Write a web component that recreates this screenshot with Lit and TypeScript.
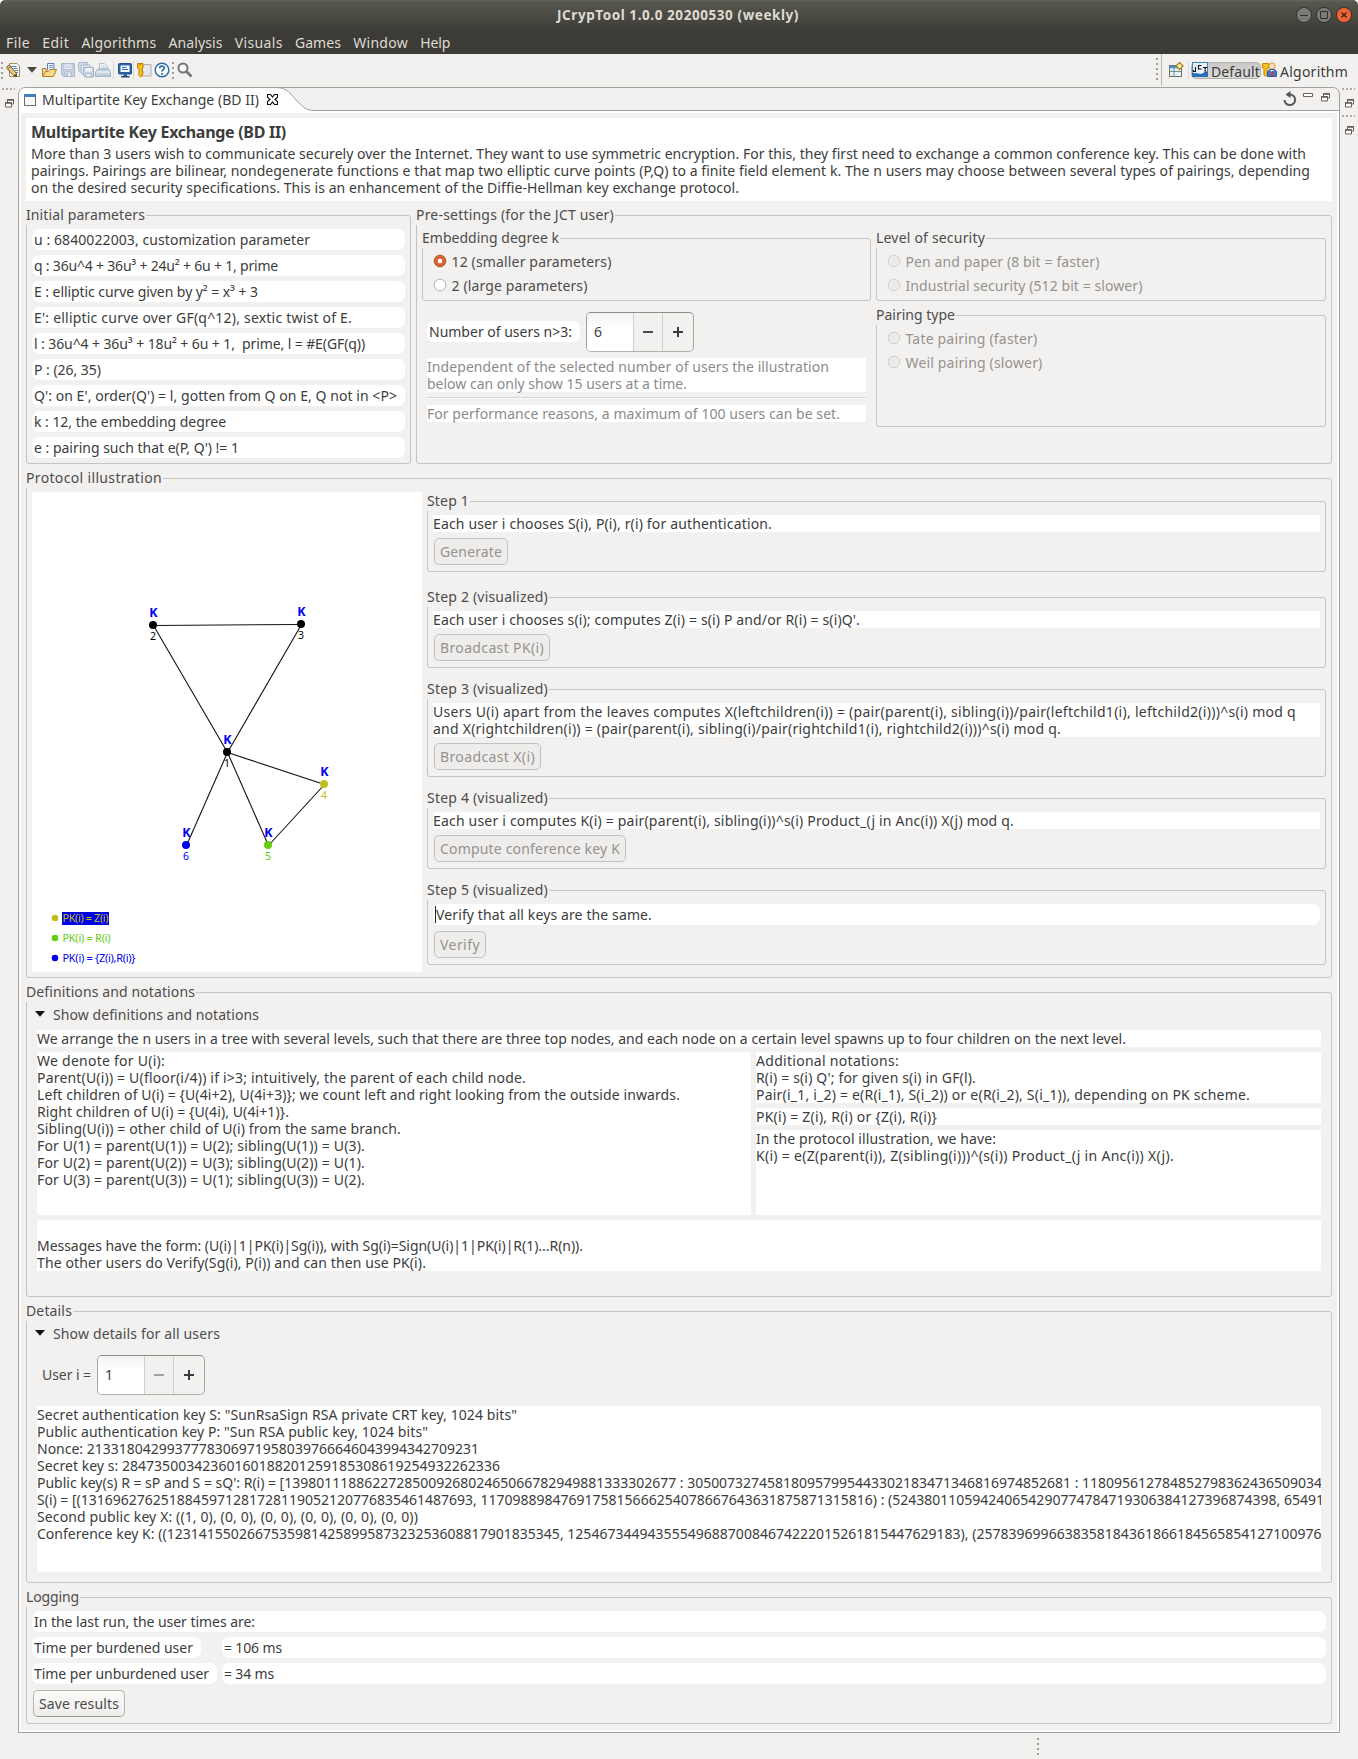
import { LitElement, html, css, svg, nothing } from "lit";
import { customElement, property } from "lit/decorators.js";

/** A single line of text whose tracking is adjusted to occupy a given width. */
@customElement("fit-text")
class FitText extends LitElement {
  static styles = css`
    :host { display: inline-block; white-space: pre; }
    .run { display: inline-block; }
  `;
  @property() text = "";
  @property({ type: Number }) w = 0;
  render() {
    return html`<span class="run">${this.text}</span>`;
  }
  updated() {
    const run = this.renderRoot.querySelector<HTMLElement>(".run")!;
    run.style.letterSpacing = "0px";
    const natural = run.getBoundingClientRect().width;
    run.style.letterSpacing = `${(this.w - natural) / Math.max(1, this.text.length)}px`;
  }
}

const t = (text: string, w: number) => html`<fit-text .text=${text} .w=${w}></fit-text>`;

type Line = [string, number];

const MENU: Line[] = [["File", 24], ["Edit", 27], ["Algorithms", 75], ["Analysis", 54], ["Visuals", 48], ["Games", 46], ["Window", 55], ["Help", 30]];

const INTRO: Line[] = [
  ["More than 3 users wish to communicate securely over the Internet. They want to use symmetric encryption. For this, they first need to exchange a common conference key. This can be done with", 1275],
  ["pairings. Pairings are bilinear, nondegenerate functions e that map two elliptic curve points (P,Q) to a finite field element k. The n users may choose between several types of pairings, depending", 1279],
  ["on the desired security specifications. This is an enhancement of the Diffie-Hellman key exchange protocol.", 708],
];

const PARAMS: Line[] = [
  ["u : 6840022003, customization parameter", 276],
  ["q : 36u^4 + 36u³ + 24u² + 6u + 1, prime", 244],
  ["E : elliptic curve given by y² = x³ + 3", 224],
  ["E': elliptic curve over GF(q^12), sextic twist of E.", 318],
  ["l : 36u^4 + 36u³ + 18u² + 6u + 1,  prime, l = #E(GF(q))", 331],
  ["P : (26, 35)", 67],
  ["Q': on E', order(Q') = l, gotten from Q on E, Q not in <P>", 363],
  ["k : 12, the embedding degree", 192],
  ["e : pairing such that e(P, Q') != 1", 205],
];

interface Step { title: Line; lines: Line[]; button: Line; input?: boolean; }
const STEPS: Step[] = [
  { title: ["Step 1", 42], lines: [["Each user i chooses S(i), P(i), r(i) for authentication.", 339]], button: ["Generate", 62] },
  { title: ["Step 2 (visualized)", 121], lines: [["Each user i chooses s(i); computes Z(i) = s(i) P and/or R(i) = s(i)Q'.", 427]], button: ["Broadcast PK(i)", 104] },
  {
    title: ["Step 3 (visualized)", 121],
    lines: [
      ["Users U(i) apart from the leaves computes X(leftchildren(i)) = (pair(parent(i), sibling(i))/pair(leftchild1(i), leftchild2(i)))^s(i) mod q", 863],
      ["and X(rightchildren(i)) = (pair(parent(i), sibling(i)/pair(rightchild1(i), rightchild2(i)))^s(i) mod q.", 628],
    ],
    button: ["Broadcast X(i)", 95],
  },
  { title: ["Step 4 (visualized)", 121], lines: [["Each user i computes K(i) = pair(parent(i), sibling(i))^s(i) Product_(j in Anc(i)) X(j) mod q.", 581]], button: ["Compute conference key K", 180] },
  { title: ["Step 5 (visualized)", 121], lines: [["Verify that all keys are the same.", 216]], button: ["Verify", 40], input: true },
];

const DENOTE: Line[] = [
  ["We denote for U(i):", 128],
  ["Parent(U(i)) = U(floor(i/4)) if i>3; intuitively, the parent of each child node.", 489],
  ["Left children of U(i) = {U(4i+2), U(4i+3)}; we count left and right looking from the outside inwards.", 643],
  ["Right children of U(i) = {U(4i), U(4i+1)}.", 252],
  ["Sibling(U(i)) = other child of U(i) from the same branch.", 364],
  ["For U(1) = parent(U(1)) = U(2); sibling(U(1)) = U(3).", 328],
  ["For U(2) = parent(U(2)) = U(3); sibling(U(2)) = U(1).", 328],
  ["For U(3) = parent(U(3)) = U(1); sibling(U(3)) = U(2).", 328],
];
const NOTATION: Line[] = [
  ["Additional notations:", 143],
  ["R(i) = s(i) Q'; for given s(i) in GF(l).", 220],
  ["Pair(i_1, i_2) = e(R(i_1), S(i_2)) or e(R(i_2), S(i_1)), depending on PK scheme.", 494],
];
const KEYS: Line[] = [
  ['Secret authentication key S: "SunRsaSign RSA private CRT key, 1024 bits"', 480],
  ['Public authentication key P: "Sun RSA public key, 1024 bits"', 391],
  ["Nonce: 2133180429937778306971958039766646043994342709231", 442],
  ["Secret key s: 28473500342360160188201259185308619254932262336", 463],
  ["Public key(s) R = sP and S = sQ': R(i) = [1398011188622728500926802465066782949881333302677 : 305007327458180957995443302183471346816974852681 : 118095612784852798362436509034", 1285],
  ["S(i) = [(1316962762518845971281728119052120776835461487693, 1170988984769175815666254078667643631875871315816) : (524380110594240654290774784719306384127396874398, 65491", 1287],
  ["Second public key X: ((1, 0), (0, 0), (0, 0), (0, 0), (0, 0), (0, 0))", 381],
  ["Conference key K: ((1231415502667535981425899587323253608817901835345, 1254673449435554968870084674222015261815447629183), (2578396996638358184361866184565854127100976", 1284.5],
];

const BLACK = "#000", OLIVE = "#bfbe1f", GREEN = "#66cc10", BLUE = "#0000ee";
const NODES = [
  { n: 1, x: 195, y: 260, c: BLACK },
  { n: 2, x: 121, y: 133, c: BLACK },
  { n: 3, x: 269, y: 132, c: BLACK },
  { n: 4, x: 292, y: 292, c: OLIVE },
  { n: 5, x: 236, y: 353, c: GREEN },
  { n: 6, x: 154, y: 353, c: BLUE },
];
const EDGES = [[2, 3], [2, 1], [3, 1], [1, 4], [1, 5], [1, 6], [4, 5]];

const ICONS = {
  newFile: svg`<path d="M3.500 1.500h7.500l2.500 2.500v10.500h-10z" fill="#f7f9fd" stroke="#a98f4e"/><path d="M5.500 4.500h5M7.500 6.500h4M9 8.500h3M10 10.500h2" stroke="#5b86c0"/><path d="M1 4.500l2.500-1.500 7 8.500v2.500l-3-.5-6.500-7z" fill="#e7c67f" stroke="#6d5222" stroke-width=".9"/><path d="M2 6.500l3-2M8 13.500l2.500 1v-2.500z" fill="#222" stroke="#6d5222" stroke-width=".8"/>`,
  open: svg`<path d="M6.500 8v-6.500h6.500v8" fill="#eef3fb" stroke="#5d82b5"/><path d="M8 3.500h4M8 5.500h4" stroke="#6f97cc"/><path d="M1.500 14v-7.500h3l1 1.500v3" fill="#f6d78c" stroke="#b07c1c"/><path d="M1.500 14.500l3-5h3l1.500-2h6.500l-3 7z" fill="#f8d98a" stroke="#b5801f"/>`,
  save: svg`<path d="M1.500 1.500h13v13h-11l-2-2z" fill="#c6d2e2" stroke="#a9b9cd"/><path d="M4 2h8v5.500h-8z" fill="#f1f4f8" stroke="#b3c1d4" stroke-width=".8"/><path d="M5 4h6M5 5.700h6" stroke="#bcc8d8" stroke-width=".8"/><path d="M5 10h6v4.500h-6z" fill="#eef1f5" stroke="#9fb0c6" stroke-width=".8"/><path d="M6.500 11h1.500v3h-1.500z" fill="#a4b4c9"/>`,
  saveAll: svg`<path d="M.5.5h9v10h-7l-2-2z" fill="#d6dfe9" stroke="#a9b9cd"/><path d="M3 3h9v9h-8l-1-1z" fill="#e4e9ef" stroke="#a9b9cd"/><path d="M5.500 5.500h10v9.500h-8.500l-1.500-1.500z" fill="#cbd6e4" stroke="#a1b3c9"/><path d="M7.500 6h6v3.500h-6z" fill="#f4f6f9"/><path d="M8 11.500h5v3.500h-5z" fill="#eef1f5" stroke="#9fb0c6" stroke-width=".8"/>`,
  print: svg`<path d="M4.500 8v-6.500h5l2.500 2.500v4" fill="#f0f3f7" stroke="#b4c2d3"/><path d="M6 4.500h4M6 6.500h5" stroke="#bccadb"/><path d="M.500 10l2.500-3h10.500l2 3v4.500h-15z" fill="#cbd5e2" stroke="#9db0c8"/><path d="M.500 10h15" stroke="#fff" stroke-width=".8"/><path d="M2 14.500l1.500-2h9l1.500 2z" fill="#b5c5d9"/>`,
  monitor: svg`<rect x="1.500" y="1.500" width="13" height="10.500" rx="1" fill="#2d62a8" stroke="#234f8d"/><rect x="3.500" y="3.500" width="9" height="6.500" fill="#f3f7fd"/><path d="M5 5.500h4.500M5 7.500h6" stroke="#3b6db1"/><path d="M6.500 12.500h3.500v1.500h2.500v1.500h-8.500v-1.500h2.500z" fill="#234c86"/>`,
  keyBook: svg`<path d="M6.500 2.500h8.500v11.500h-8.500z" fill="#e4e6f0" stroke="#b7b0a0"/><path d="M1.500 1.500h5.500v4.500h-1v3.500h1v2h-1v2.500l-1.500 1-1.500-1.500v-7.500h-1.500z" fill="#fcc914" stroke="#c37d06"/><circle cx="4" cy="3" r=".8" fill="#8b5500"/>`,
  help: svg`<circle cx="8" cy="8" r="6.800" fill="#fdfeff" stroke="#2c69a6" stroke-width="1.400"/><path d="M5.700 6.300c0-3 4.800-2.900 4.600-.1-.1 1.500-2.200 1.600-2.200 3.300" fill="none" stroke="#2c69a6" stroke-width="1.700"/><circle cx="8.100" cy="11.800" r="1.100" fill="#2c69a6"/>`,
  search: svg`<circle cx="6" cy="6" r="4.500" fill="#fafafa" stroke="#757575" stroke-width="2"/><path d="M9.500 9.500l5 5" stroke="#757575" stroke-width="2.600"/>`,
  perspective: svg`<rect x="1.500" y="3.500" width="12" height="11" fill="#e4f0fa" stroke="#747061"/><path d="M1.500 5h9" stroke="#4d8fca" stroke-width="2.500"/><path d="M6 5v9.500M6 9.500h7.500M1.500 9.500h4.500" stroke="#78918f"/><path d="M11.500.5l3.500 3.500-3.500 3.500-3.500-3.500z" fill="#fff0b3" stroke="#a97f15" stroke-width="1.200"/>`,
  jct: svg`<rect width="16" height="15" fill="#3f83c5"/><path d="M1 1h14v9l-6 2-8-1z" fill="#e9f2fb"/><path d="M0 11l9 1 7-3v6h-16z" fill="#2c6eb5"/><path d="M3.500 5v4.500h-2v-1.500M9.500 3.500h-3v3.500h3M11 5.500h4.500M13.200 5.500v5" fill="none" stroke="#111" stroke-width="1.100"/>`,
  algorithm: svg`<path d="M.5 1.500h6v4.500h-1.500v7l-1.500 1.500-1.500-1.500v-7h-1.500z" fill="#fac51a" stroke="#cf8106"/><circle cx="10" cy="4" r="3.200" fill="#f6dfad" stroke="#cf9d58"/><path d="M5.500 14.500v-5l2-2h5l2 2v5z" fill="#3e7bd0" stroke="#2b5faa"/><path d="M8 8h4l-2 3z" fill="#fff"/><path d="M9.500 9h1.500l.5 5h-2.500z" fill="#d2332b"/>`,
};
const icon = (body: unknown, label: string, cls = "") => html`<svg class="icon ${cls}" viewBox="0 0 16 16" aria-label=${label}>${body}</svg>`;
const restore = html`<svg class="restore" width="9" height="9" viewBox="0 0 9 9"><path d="M2.500 4v-3.500h6v4.500h-2" fill="#fff" stroke="#6b6259"/><path d="M2 1h7" stroke="#6b6259" stroke-width="1.600"/><path d="M.5 3.500h6v4.500h-6z" fill="#fff" stroke="#6b6259"/><path d="M0 4h7" stroke="#6b6259" stroke-width="1.600"/></svg>`;

@customElement("app-root")
class AppRoot extends LitElement {
  static styles = css`
    :host { display: block; width: 1358px; height: 1759px; overflow: hidden; background: #f2f1f0; color: #3c3c3c;
      font: 14px/17px "Noto Sans", "Open Sans", sans-serif; }
    * { box-sizing: border-box; }
    .window { display: flex; flex-direction: column; height: 100%; background: #fff; }
    .titlebar { height: 30px; flex: none; display: grid; grid-template-columns: 1fr auto 1fr; align-items: center; border-radius: 5px 5px 0 0;
      background: linear-gradient(#66655a 0, #59584e 2px, #3e3d38 29px); color: #dfdbd2; font-weight: 700; font-size: 13.500px; padding-right: 6px; }
    .title { grid-column: 2; margin-left: 4px; }
    .buttons { display: flex; justify-content: flex-end; gap: 4px; }
    .buttons svg { width: 16px; height: 16px; display: block; }
    .menubar { height: 24px; flex: none; background: #3c3b37; color: #dfdbd2; display: flex; gap: 12.200px; padding: 4px 0 0 6px; }
    .toolbar { height: 33px; flex: none; background: #f2f1f0; display: flex; align-items: center; position: relative; }
    .icon { width: 16px; height: 16px; flex: none; display: block; }
    .tools { display: flex; align-items: center; padding-left: 1px; padding-bottom: 1px; flex: 1; }
    .dots { width: 2px; height: 17px; background: repeating-linear-gradient(#a29d94 0 2px, transparent 2px 5px); }
    .dots.tall { height: 24px; }
    .dots.mid { margin: 0 3px 0 2px; }
    .hdots { width: 13px; height: 2px; background: repeating-linear-gradient(90deg, #b0aaa0 0 2px, transparent 2px 4px); }
    .sep { width: 1px; height: 18px; background: #dcdad7; }
    .drop { margin: 0 4px 0 5px; }
    .ml1 { margin-left: 1px; }
    .ml2 { margin-left: 2px; }
    .ml3 { margin-left: 3px; }
    .ml4 { margin-left: 4px; }
    .switcher { display: flex; align-items: center; width: 202px; height: 33px; padding-bottom: 1px; }
    .switcher .edge { width: 1px; height: 32px; background: #bab8b5; margin: 0 6px 0 3px; }
    .chosen { display: flex; align-items: center; height: 17px; width: 70px; border: 1px solid #b3b1ae; border-radius: 5px; background: linear-gradient(#cbc9c7, #dcdbd9); margin-left: 2px; }
    .chosen .icon { margin: 0 3px 0 0; }
    .algo { margin: 2px 0 0 2px; }
    .chosen fit-text { margin-top: 2px; }
    .work { flex: 1; background: #f2f1f0; display: grid; grid-template-columns: 18px 1322px 18px; grid-template-rows: 1646px 1fr; }
    .trim { display: flex; flex-direction: column; align-items: center; padding-top: 1px; }
    .trim .restore { margin: 9px 0 7px; }
    .trim .hdots { margin-left: -1px; }
    .tabs { height: 24px; position: relative; display: flex; align-items: flex-start; }
    .tabs .outline { position: absolute; left: 0; top: 0; width: 1322px; height: 24px; }
    .tab { position: relative; flex: 1; display: flex; align-items: center; padding: 4px 0 0 6px; }
    .tab .label { margin: 0 8px 0 6px; }
    .viewbar { position: relative; display: flex; padding: 4px 10px 0 0; align-items: flex-start; }
    .refresh { margin-right: 6px; }
    .minimize { margin: 2px 8px 0 0; }
    .view-restore { line-height: 0; margin-top: 2px; }
    .page { height: 1622px; border: solid #a3a19e; border-width: 0 1px 1px; background: #fff; padding: 2px; }
    .content { background: #f2f1f0; height: 1617px; padding: 5px; display: flex; flex-direction: column; gap: 5px; }
    .intro { background: #fff; height: 83px; padding: 3px 5px 0; flex: none; }
    .heading { font-weight: 700; font-size: 16px; line-height: 22px; height: 22px; margin-bottom: 2px; }
    .ln { height: 17px; white-space: pre; }
    fieldset.group { margin: 0; min-width: 0; border: 1px solid #c5c4c2; border-radius: 3px; padding: 4px 5px 0; flex: none; }
    fieldset.group > legend { display: block; padding: 0 1px 2px 0; margin-left: -6px; background: #f2f1f0; color: #4c4c4c; height: 19px; line-height: 17px; }
    .cols { display: flex; gap: 5px; }
    .g-params { width: 385px; height: 258px; }
    .g-pre { flex: 1 !important; height: 258px; }
    .pill { background: #fff; border-radius: 7px; height: 21px; padding: 2px; }
    .entry { display: flex; }
    .rows { display: flex; flex-direction: column; gap: 5px; }
    .embed { width: 449px; height: 72px; }
    .right { width: 450px; }
    .level { height: 72px; }
    .pairing { height: 121px; margin-top: 5px !important; }
    .radio { display: flex; align-items: center; height: 24px; padding-left: 5px; color: #4c4c4c; }
    .radio svg { margin-right: 4.500px; width: 14px; height: 14px; }
    .radios { margin-top: -3px; }
    .off { color: #96928d; }
    .users { display: flex; align-items: center; padding-left: 5px; margin-top: 11px; height: 40px; }
    .users .pill { width: 153px; margin: -1px 6px 0 0; }
    .spinner { display: grid; grid-template-columns: 46px 29px 1fr; width: 108px; height: 40px; border: 1px solid #a6a4a1; border-bottom-color: #b2b0ad; border-top-color: #8f8d8a; border-radius: 5px; overflow: hidden; }
    .spinner .value { background: linear-gradient(#f3f3f3, #fff 40%); padding: 10px 7px; }
    .spinner .btn { border-left: 1px solid #d0cecc; display: grid; place-items: center; padding-right: 1px; }
    .note { background: #fff; color: #8b8b8b; width: 439px; margin-left: 5px; }
    .n1 { margin-top: 6px; }
    .rule { height: 2px; width: 439px; margin: 5px 0 6px 5px; border-top: 1px solid #d8d6d4; border-bottom: 1px solid #fafafa; }
    .g-proto { height: 509px; }
    .canvas { background: #fff; width: 390px; height: 480px; display: block; }
    .steps { flex: 1; display: flex; flex-direction: column; gap: 12px; }
    .steps .group:first-child { margin-bottom: 4px; }
    .steps .group { padding-bottom: 6px; }
    .white { background: #fff; }
    .button { display: inline-block; height: 27px; margin: 6px 0 0 1px; border: 1px solid #c2c1bf; border-radius: 5px; background: #eeedec; color: #96928d; padding: 4px 5px 0; }
    .step-btn { display: flex; }
    .caret { border-left: 1px solid #222; height: 17px; }
    .g-defs { height: 314px; }
    .expander { display: flex; align-items: center; height: 17px; padding-left: 3px; color: #4c4c4c; }
    .expander svg { margin-right: 8px; margin-top: -2px; }
    .inner { margin: 0 5px; }
    .defs { display: grid; grid-template-columns: 714px 565px; gap: 5px; margin-top: 7px; }
    .span { grid-column: 1 / 3; }
    .stack { display: flex; flex-direction: column; gap: 5px; }
    .fill { flex: 1; }
    .denote { height: 163px; }
    .msg { height: 51px; padding-top: 17px; }
    .g-details { height: 281px; }
    .user { display: flex; align-items: center; height: 40px; margin: 13px 0 11px 10px; color: #4c4c4c; }
    .user > fit-text { margin-top: -1px; }
    .user .spinner { margin-left: 6px; color: #3c3c3c; }
    .keys { height: 166px; overflow: hidden; }
    .g-log { height: 136px; }
    .log { display: grid; grid-template-columns: 185px 1104px; gap: 5px; }
    .burdened { width: 169px; }
    .save { background: linear-gradient(#fbfbfa, #eeedeb); border-color: #b4b2af; border-bottom-color: #9a9895; color: #4c4c4c; }
    .status { grid-column: 1 / 4; padding: 5px 0 0 1037px; }
    .net { font-size: 11px; }
    .net .k { font-weight: 700; font-size: 12.500px; fill: #0000ee; text-anchor: middle; }
    .net .num { text-anchor: middle; font-size: 10.500px; }
    .net .legend { font-size: 11px; }
  `;

  private lines(ls: Line[]) {
    return ls.map(([s, w]) => html`<div class="ln">${t(s, w)}</div>`);
  }
  private radio(label: Line, checked = false, off = false) {
    return html`<div class="radio ${off ? "off" : ""}">
      <svg viewBox="0 0 14 14"><circle cx="7" cy="7" r="5.800" fill=${checked ? "#d9663a" : off ? "#ebebeb" : "#fff"} stroke=${checked ? "#b9501f" : off ? "#d2d1d0" : "#b7b5b3"}/>
      ${checked ? svg`<circle cx="7" cy="7" r="2.300" fill="#fff"/>` : nothing}</svg>${t(label[0], label[1])}</div>`;
  }
  private spinner(value: string, minusOff = false) {
    return html`<div class="spinner"><div class="value">${value}</div>
      <div class="btn"><svg width="10" height="10"><path d="M0 5h10" stroke=${minusOff ? "#a5a3a1" : "#4a4a4a"} stroke-width="2"/></svg></div>
      <div class="btn"><svg width="10" height="10"><path d="M0 5h10M5 0v10" stroke="#3c3c3c" stroke-width="2"/></svg></div></div>`;
  }
  private expander(label: Line) {
    return html`<div class="expander"><svg width="10" height="6"><path d="M0 0h10l-5 5.800z" fill="#111"/></svg>${t(label[0], label[1])}</div>`;
  }
  private network() {
    const at = (n: number) => NODES.find((d) => d.n === n)!;
    const legend: [string, string, number][] = [["PK(i) = Z(i)", OLIVE, 46], ["PK(i) = R(i)", GREEN, 48], ["PK(i) = {Z(i),R(i)}", BLUE, 73]];
    return html`<svg class="canvas net" viewBox="0 0 390 480">
      ${EDGES.map(([a, b]) => svg`<line x1=${at(a).x + 0.5} y1=${at(a).y + 0.5} x2=${at(b).x + 0.5} y2=${at(b).y + 0.5} stroke="#111" stroke-width="1.100"/>`)}
      ${NODES.map((d) => svg`<circle cx=${d.x} cy=${d.y} r="4" fill=${d.c}/>
        <text class="k" x=${d.x + 0.5} y=${d.y - 8.5}>K</text>
        <text class="num" x=${d.x} y=${d.y + 15} fill=${d.c}>${d.n}</text>`)}
      <rect x="30" y="420" width="47" height="13" fill="#0000e6"/>
      ${legend.map(([s, c, w], i) => svg`<circle cx="23" cy=${426 + i * 20} r="3.300" fill=${c}/>
        <text class="legend" x="30.500" y=${430 + i * 20} fill=${c} textLength=${w}>${s}</text>`)}
    </svg>`;
  }

  render() {
    return html`<div class="window">
      <div class="titlebar">
        <div class="title">${t("JCrypTool 1.0.0 20200530 (weekly)", 242)}</div>
        <div class="buttons">
          <svg viewBox="0 0 16 16"><circle cx="8" cy="8" r="7.600" fill="#7b7a74" stroke="#33322e"/><path d="M4 8.500h8" stroke="#33322e"/></svg>
          <svg viewBox="0 0 16 16"><circle cx="8" cy="8" r="7.600" fill="#7b7a74" stroke="#33322e"/><path d="M4.500 4.500h7v7h-7z" fill="none" stroke="#33322e"/></svg>
          <svg viewBox="0 0 16 16"><circle cx="8" cy="8" r="7.600" fill="#ee6439" stroke="#33322e"/><path d="M5.500 5.500l5 5M10.500 5.500l-5 5" stroke="#4a1f10" stroke-width="1.300"/></svg>
        </div>
      </div>
      <div class="menubar">${MENU.map(([s, w]) => t(s, w))}</div>
      <div class="toolbar">
        <div class="tools">
          <div class="dots"></div>
          ${icon(ICONS.newFile, "New", "ml3")}
          <svg class="drop" width="10" height="6"><path d="M0 0h10l-5 5.800z" fill="#4a4845"/></svg>
          ${icon(ICONS.open, "Open")}
          ${icon(ICONS.save, "Save", "ml3")}
          ${icon(ICONS.saveAll, "Save all", "ml2")}
          ${icon(ICONS.print, "Print", "ml1")}
          <div class="sep ml2"></div>${icon(ICONS.monitor, "Screen", "ml3")}
          <div class="sep"></div>${icon(ICONS.keyBook, "Keystore", "ml2")}
          ${icon(ICONS.help, "Help", "ml2")}
          <div class="dots mid"></div>${icon(ICONS.search, "Search")}
        </div>
        <div class="switcher">
          <div class="dots tall"></div><div class="edge"></div>
          ${icon(ICONS.perspective, "Open perspective")}
          <div class="sep ml4"></div>
          <div class="chosen">${icon(ICONS.jct, "JCT")}${t("Default", 49)}</div>
          ${icon(ICONS.algorithm, "Algorithm", "ml1")}
          <div class="algo">${t("Algorithm", 68)}</div>
        </div>
      </div>
      <div class="work">
        <div class="trim"><div class="hdots"></div>${restore}</div>
        <div class="folder">
          <div class="tabs">
            <svg class="outline" viewBox="0 0 1322 24">
              <path d="M.5 24V5.500L5.500.5H258C270 .5 273 8 279 14S288 23.500 296 23.500V24z" fill="#fff"/>
              <path d="M.5 24V7Q1 1 7 .5H1315Q1321 1 1321.500 7V24M258 .5C270 .5 273 8 279 14S288 23.500 296 23.500H1321" fill="none" stroke="#a3a19e"/>
            </svg>
            <div class="tab">
              <svg width="12" height="12"><path d="M.5.5h11v11h-11z" fill="#f7f9fd" stroke="#6b6a5f"/><path d="M0 1.500h12" stroke="#3d7fc0" stroke-width="3"/></svg>
              <span class="label">${t("Multipartite Key Exchange (BD II)", 217)}</span>
              <svg width="11" height="11"><path d="M.5.5h3l2 2.500 2-2.500h3v3l-2.500 2 2.500 2v3h-3l-2-2.500-2 2.500h-3v-3l2.500-2-2.500-2z" fill="#fff" stroke="#111" stroke-width="1.200"/></svg>
            </div>
            <div class="viewbar">
              <svg class="refresh" width="14" height="16" viewBox="0 0 14 16"><path d="M1.500 9a5.300 5.300 0 1 0 5-5.500" fill="none" stroke="#555" stroke-width="2"/><path d="M2.500 3.500l5-3.500v7z" fill="#555"/></svg>
              <svg class="minimize" width="10" height="4"><path d="M.5.5h9v3h-9z" fill="#fff" stroke="#6b6259"/></svg>
              <span class="view-restore">${restore}</span>
            </div>
          </div>
          <div class="page"><div class="content">
            <div class="intro"><div class="heading">${t("Multipartite Key Exchange (BD II)", 255)}</div>${this.lines(INTRO)}</div>
            <div class="cols">
              <fieldset class="group g-params"><legend>${t("Initial parameters", 119)}</legend>
                <div class="rows">${PARAMS.map(([s, w]) => html`<div class="pill">${t(s, w)}</div>`)}</div>
              </fieldset>
              <fieldset class="group g-pre"><legend>${t("Pre-settings (for the JCT user)", 198)}</legend>
                <div class="cols">
                  <div>
                    <fieldset class="group embed"><legend>${t("Embedding degree k", 137)}</legend>
                      <div class="radios">${this.radio(["12 (smaller parameters)", 160], true)}${this.radio(["2 (large parameters)", 136])}</div></fieldset>
                    <div class="users"><div class="pill">${t("Number of users n>3:", 143)}</div>${this.spinner("6")}</div>
                    <div class="note n1">${this.lines([["Independent of the selected number of users the illustration", 402], ["below can only show 15 users at a time.", 260]])}</div>
                    <div class="rule"></div>
                    <div class="note">${this.lines([["For performance reasons, a maximum of 100 users can be set.", 413]])}</div>
                  </div>
                  <div class="right">
                    <fieldset class="group level"><legend>${t("Level of security", 109)}</legend>
                      <div class="radios">${this.radio(["Pen and paper (8 bit = faster)", 194], false, true)}${this.radio(["Industrial security (512 bit = slower)", 237], false, true)}</div></fieldset>
                    <fieldset class="group pairing"><legend>${t("Pairing type", 79)}</legend>
                      <div class="radios">${this.radio(["Tate pairing (faster)", 132], false, true)}${this.radio(["Weil pairing (slower)", 137], false, true)}</div></fieldset>
                  </div>
                </div>
              </fieldset>
            </div>
            <fieldset class="group g-proto"><legend>${t("Protocol illustration", 136)}</legend>
              <div class="cols">${this.network()}
                <div class="steps">${STEPS.map((s) => html`<fieldset class="group"><legend>${t(s.title[0], s.title[1])}</legend>
                  ${s.input ? html`<div class="pill entry"><div class="caret"></div>${this.lines(s.lines)}</div>` : html`<div class="white">${this.lines(s.lines)}</div>`}
                  <div class="step-btn"><div class="button">${t(s.button[0], s.button[1])}</div></div></fieldset>`)}</div>
              </div>
            </fieldset>
            <fieldset class="group g-defs"><legend>${t("Definitions and notations", 169)}</legend>
              ${this.expander(["Show definitions and notations", 206])}
              <div class="inner defs">
                <div class="white span">${this.lines([["We arrange the n users in a tree with several levels, such that there are three top nodes, and each node on a certain level spawns up to four children on the next level.", 1089]])}</div>
                <div class="white denote">${this.lines(DENOTE)}</div>
                <div class="stack">
                  <div class="white">${this.lines(NOTATION)}</div>
                  <div class="white">${this.lines([["PK(i) = Z(i), R(i) or {Z(i), R(i)}", 181]])}</div>
                  <div class="white fill">${this.lines([["In the protocol illustration, we have:", 240], ["K(i) = e(Z(parent(i)), Z(sibling(i)))^(s(i)) Product_(j in Anc(i)) X(j).", 418]])}</div>
                </div>
                <div class="white span msg">${this.lines([["Messages have the form: (U(i)|1|PK(i)|Sg(i)), with Sg(i)=Sign(U(i)|1|PK(i)|R(1)...R(n)).", 546], ["The other users do Verify(Sg(i), P(i)) and can then use PK(i).", 389]])}</div>
              </div>
            </fieldset>
            <fieldset class="group g-details"><legend>${t("Details", 46)}</legend>
              ${this.expander(["Show details for all users", 167])}
              <div class="user">${t("User i =", 49)}${this.spinner("1", true)}</div>
              <div class="inner white keys">${this.lines(KEYS)}</div>
            </fieldset>
            <fieldset class="group g-log"><legend>${t("Logging", 53)}</legend>
              <div class="log">
                <div class="pill span">${t("In the last run, the user times are:", 221)}</div>
                <div class="pill burdened">${t("Time per burdened user", 159)}</div><div class="pill">${t("= 106 ms", 58)}</div>
                <div class="pill">${t("Time per unburdened user", 175)}</div><div class="pill">${t("= 34 ms", 50)}</div>
              </div>
              <div class="step-btn"><div class="button save">${t("Save results", 80)}</div></div>
            </fieldset>
          </div></div>
        </div>
        <div class="trim"><div class="hdots"></div>${restore}<div class="hdots"></div>${restore}</div>
        <div class="status"><div class="dots"></div></div>
      </div>
    </div>`;
  }
}
